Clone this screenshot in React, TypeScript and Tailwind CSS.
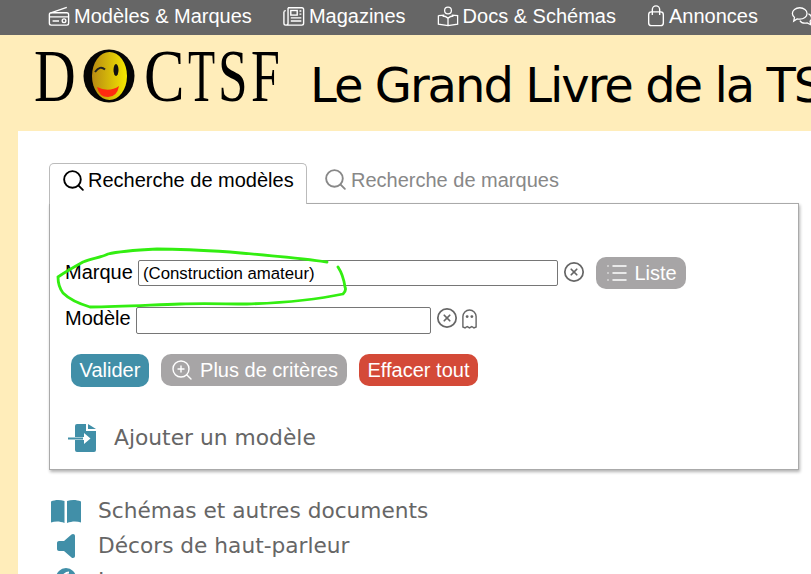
import { CircleX, List, Search, ZoomIn } from 'lucide-react';

type IconProps = { className?: string };

function RadioIcon({ className }: IconProps) {
  return (
    <svg viewBox="0 0 24 24" fill="none" stroke="currentColor" strokeWidth="1.5" className={className}>
      <rect x="1.5" y="8.5" width="21" height="13.5" rx="2" />
      <path d="M3 8.5 20.5 2.5M1.5 13h21M5 17.5h7" />
      <circle cx="17.5" cy="17.2" r="2" />
    </svg>
  );
}

function PaperIcon({ className }: IconProps) {
  return (
    <svg viewBox="0 0 24 24" fill="none" stroke="currentColor" strokeWidth="1.5" className={className}>
      <path d="M5.5 3h15a2 2 0 0 1 2 2v15a2 2 0 0 1-2 2H3a2 2 0 0 1-2-2V7M5.5 3v17a2 2 0 0 1-2 2M1 7l2-1" />
      <rect x="8.5" y="6" width="7" height="5" />
      <path d="M18 6.5h2M18 10h2M8.5 14h11.5M8.5 17.5h11.5" />
    </svg>
  );
}

function BookUserIcon({ className }: IconProps) {
  return (
    <svg viewBox="0 0 24 24" fill="none" stroke="currentColor" strokeWidth="1.4" className={className}>
      <circle cx="12" cy="6" r="3.7" />
      <path d="M1.5 11.5V21l10.5 1.5L22.500 21v-9.500L16 11M8 11l-6.500.5M12 14.500c-1.500-1.500-3-2.500-6-2.500M12 14.500c1.500-1.500 3-2.500 6-2.500M12 14.500v8" />
    </svg>
  );
}

function BagIcon({ className }: IconProps) {
  return (
    <svg viewBox="0 0 18 24" fill="none" stroke="currentColor" strokeWidth="1.5" className={className}>
      <rect x="1" y="7.500" width="16" height="15" rx="3" />
      <path d="M5 11V5a4 4 0 0 1 8 0v6" />
    </svg>
  );
}

function BubblesIcon({ className }: IconProps) {
  return (
    <svg viewBox="0 0 24 24" fill="none" stroke="currentColor" strokeWidth="1.4" className={className}>
      <path d="M9.500 3c4.500 0 8 2.700 8 6.200s-3.500 6.300-8 6.300c-1 0-2-.1-2.900-.4L3 17.500l.8-4C2.600 12.300 1.500 10.900 1.500 9.200 1.500 5.700 5 3 9.500 3z" />
      <path d="M19 9.500c2 1 3.500 2.700 3.500 4.700 0 1.400-.7 2.600-1.700 3.500l.7 3.800-3.800-2c-3 .7-6.500 0-8-2.500" />
    </svg>
  );
}

function GhostIcon({ className }: IconProps) {
  return (
    <svg viewBox="0 0 18 22" fill="none" stroke="currentColor" strokeWidth="1.5" className={className}>
      <path d="M2 20V9a7 7 0 0 1 14 0v11l-2.300 1-2.300-1.500L9 21l-2.400-1.500L4.300 21z" />
      <circle cx="6.500" cy="9" r=".8" fill="currentColor" />
      <circle cx="11.500" cy="9" r=".8" fill="currentColor" />
    </svg>
  );
}

function FileInIcon({ className }: IconProps) {
  return (
    <svg viewBox="0 0 28 28" className={className}>
      <path fill="#418fa8" d="M7 2a2 2 0 0 1 2-2h9v7h10v19a2 2 0 0 1-2 2H9a2 2 0 0 1-2-2V16h9v4l6.500-5.500L16 9v4H7z" />
      <path fill="#418fa8" d="M20 0l8 5h-8zM0 13.500h15v2H0z" />
    </svg>
  );
}

function BookIcon({ className }: IconProps) {
  return (
    <svg viewBox="0 0 30 24" fill="#418fa8" className={className}>
      <path d="M0 2.500C4 .5 9 .5 13.500 2v22C9 22 4 22 0 23.500z" />
      <path d="M16 2c4.500-1.500 9.500-1.500 14 .5v21c-4-1.500-9-1.500-14 .5z" />
    </svg>
  );
}

function SpeakerIcon({ className }: IconProps) {
  return (
    <svg viewBox="0 0 18 24" fill="#418fa8" className={className}>
      <path d="M16 0c1.200 0 2 .8 2 2v20c0 1.200-.8 2-2 2-.6 0-1-.2-1.500-.6L7 17H2c-1.100 0-2-.9-2-2V9c0-1.100.9-2 2-2h5l7.500-6.400C15 .2 15.400 0 16 0z" />
    </svg>
  );
}

function DiscIcon({ className }: IconProps) {
  return (
    <svg viewBox="0 0 20 20" className={className}>
      <circle cx="10" cy="10" r="10" fill="#418fa8" />
      <path d="M7 10c0-3 2.500-5.500 6-5.500" fill="none" stroke="#ffffff" strokeWidth="2" />
    </svg>
  );
}

function Smiley() {
  return (
    <svg viewBox="0 0 52 54" className="w-[52px] h-[54px] shrink-0">
      <defs>
        <linearGradient id="face" x1="0" y1="0" x2="1" y2="0">
          <stop offset="0" stopColor="#b78a12" />
          <stop offset="1" stopColor="#f5e800" />
        </linearGradient>
      </defs>
      <ellipse cx="26" cy="27" rx="25.500" ry="26.500" fill="#050505" />
      <ellipse cx="26.500" cy="27" rx="17.500" ry="24" fill="url(#face)" />
      <path d="M12 23q5-7 10-2.500" fill="none" stroke="#222222" strokeWidth="2" />
      <ellipse cx="33" cy="21" rx="2.500" ry="6" fill="#111111" />
      <path d="M14 38q12 6 22-1q-2 11-11 11t-11-10z" fill="#ff2a10" />
    </svg>
  );
}

const logoLetters = [
  { letter: 'C', box: 'w-[44px] scale-x-[0.82]' },
  { letter: 'T', box: 'w-[30px] scale-x-[0.6]' },
  { letter: 'S', box: 'w-[33px] scale-x-[0.72]' },
  { letter: 'F', box: 'w-[28px] scale-x-[0.7]' },
];

const navItems = [
  { label: 'Modèles & Marques', icon: RadioIcon, width: 'w-[22px]' },
  { label: 'Magazines', icon: PaperIcon, width: 'w-[22px]' },
  { label: 'Docs & Schémas', icon: BookUserIcon, width: 'w-[22px]' },
  { label: 'Annonces', icon: BagIcon, width: 'w-[18px]' },
  { label: '', icon: BubblesIcon, width: 'w-[26px]' },
];

export default function App() {
  return (
    <div className="relative w-[811px] h-[574px] overflow-hidden bg-[#ffedba] font-['Liberation_Sans',sans-serif]">
      {/* Top menu */}
      <nav className="h-[35px] bg-[#666666] flex items-center pl-[48px] pb-[4px] gap-[31px] text-white text-[20px] whitespace-nowrap">
        {navItems.map(item => (
          <span key={item.icon.name} className="flex items-center gap-[4px]">
            <item.icon className={`${item.width} h-[22px]`} />
            {item.label}
          </span>
        ))}
      </nav>

      {/* Header */}
      <header className="h-[96px] flex items-start pl-[34px] whitespace-nowrap">
        <div className="flex items-center h-[54px] mt-[14px] w-[245px] font-['Liberation_Serif',serif] text-[74px] leading-none text-black">
          <span className="w-[49px] inline-block origin-left scale-x-[0.78]">D</span>
          <Smiley />
          <span className="w-[9px]" />
          {logoLetters.map(l => (
            <span key={l.letter} className={`${l.box} inline-block origin-left`}>{l.letter}</span>
          ))}
        </div>
        <h1 className="ml-[31px] mt-[20px] text-[48px] leading-[60px] font-['DejaVu_Sans',sans-serif] text-black tracking-[-2px]">
          Le Grand Livre de la TSF
        </h1>
      </header>

      {/* Content */}
      <main className="ml-[18px] h-[443px] bg-white pl-[31px] pt-[32px]">
        <div className="flex items-start">
          <div className="relative z-10 -mb-px h-[41px] w-[258px] flex items-center gap-[2px] pl-[11px] pb-[8px] bg-white border border-b-0 border-[#bbbbbb] rounded-t-[5px] text-[20px] text-black">
            <Search className="w-[25px] h-[25px]" strokeWidth={1.8} />
            Recherche de modèles
          </div>
          <div className="h-[40px] flex items-center gap-[3px] pl-[16px] pb-[7px] text-[20px] text-[#888888]">
            <Search className="w-[25px] h-[25px]" strokeWidth={1.8} />
            Recherche de marques
          </div>
        </div>

        <section className="w-[750px] h-[267px] bg-white border border-[#aaaaaa] shadow-[1px_2px_3px_rgba(0,0,0,0.3)] pl-[15px] pt-[55px]">
          <div className="flex items-center h-[28px] text-[20px] text-black">
            <span className="w-[73px] -mt-[2px]">Marque</span>
            <div className="w-[420px] h-[26px] flex items-center pl-[4px] pt-[1px] border border-[#767676] rounded-[2px] text-[16.800px]">
              (Construction amateur)
            </div>
            <CircleX className="ml-[5px] w-[22px] h-[22px] text-[#666666] -mt-[2px]" strokeWidth={1.9} />
            <span className="ml-[11px] w-[90px] h-[32px] pb-[1px] flex items-center justify-center gap-[5px] bg-[#a7a5a6] rounded-[10px] text-white">
              <List className="w-[24px] h-[24px]" strokeWidth={1.5} />
              Liste
            </span>
          </div>
          <div className="flex items-center h-[28px] mt-[19px] text-[20px] text-black">
            <span className="w-[71px] -mt-[4px]">Modèle</span>
            <div className="w-[295px] h-[27px] border border-[#767676] rounded-[2px]" />
            <CircleX className="ml-[5px] w-[22px] h-[22px] text-[#666666] -mt-[4px]" strokeWidth={1.9} />
            <GhostIcon className="ml-[3px] w-[17px] h-[21px] text-[#666666] -mt-[4px]" />
          </div>
          <div className="flex items-start gap-[12px] mt-[20px] pl-[6px] text-[20px] text-white">
            <span className="h-[33px] w-[78px] pb-[1px] flex items-center justify-center bg-[#418fa8] rounded-[10px]">Valider</span>
            <span className="h-[32px] w-[186px] pb-[1px] flex items-center justify-center gap-[6px] bg-[#a7a5a6] rounded-[10px]">
              <ZoomIn className="w-[24px] h-[24px]" strokeWidth={1.4} />
              Plus de critères
            </span>
            <span className="h-[32px] w-[119px] pb-[1px] flex items-center justify-center bg-[#d44a38] rounded-[10px]">Effacer tout</span>
          </div>
          <div className="flex items-center gap-[18px] mt-[35px] pl-[3px] text-[21.800px] text-[#666666] font-['DejaVu_Sans',sans-serif]">
            <FileInIcon className="w-[28px] h-[28px] shrink-0" />
            <span>Ajouter un modèle</span>
          </div>
        </section>

        <ul className="mt-[23px] text-[21.700px] leading-[35px] text-[#666666] font-['DejaVu_Sans',sans-serif]">
          <li className="flex items-center">
            <span className="w-[49px] flex pl-[2px]"><BookIcon className="w-[30px] h-[24px]" /></span>
            Schémas et autres documents
          </li>
          <li className="flex items-center">
            <span className="w-[49px] flex pl-[8px]"><SpeakerIcon className="w-[18px] h-[24px]" /></span>
            Décors de haut-parleur
          </li>
          <li className="flex items-center">
            <span className="w-[49px] flex pl-[7px]"><DiscIcon className="w-[20px] h-[20px] -mt-[6px]" /></span>
            Lampes
          </li>
        </ul>
      </main>

      {/* Marker scribble over the brand field */}
      <svg className="absolute left-0 top-0 w-[811px] h-[574px] pointer-events-none" viewBox="0 0 811 574" fill="none">
        <path
          d="M327 262C300 258 265 255 230 252C200 250 178 249 157 249C138 250 120 251 108 254C100 258 92 258 83 262C74 267 65 272 58 277C58 284 60 289 63 293C70 300 80 304 90 307C120 307 150 305 180 304C205 303 225 304 247 304C280 303 315 300 343 294C346 291 346 289 345 287C344 280 342 273 338 267"
          stroke="#33ee11"
          strokeWidth="2.800"
          strokeLinecap="round"
        />
      </svg>
    </div>
  );
}
